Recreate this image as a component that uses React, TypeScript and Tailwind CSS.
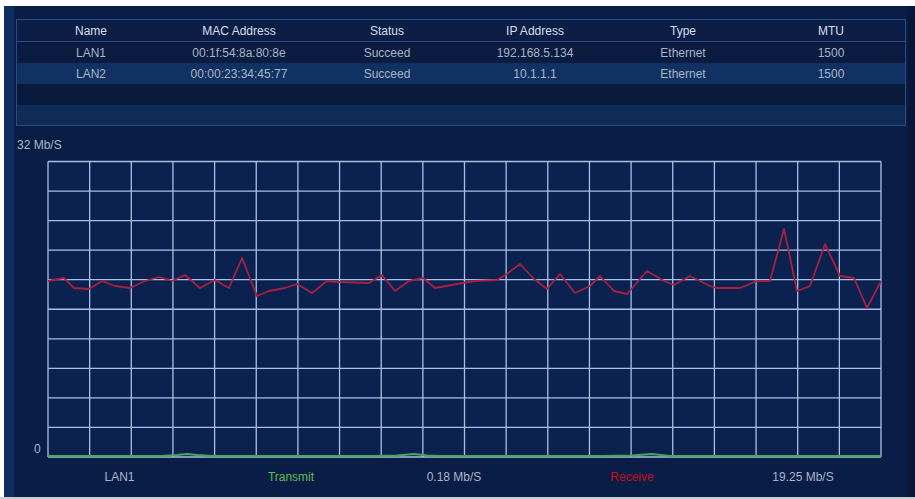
import React from 'react';

const columns = ['Name', 'MAC Address', 'Status', 'IP Address', 'Type', 'MTU'];

const rows = [
  ['LAN1', '00:1f:54:8a:80:8e', 'Succeed', '192.168.5.134', 'Ethernet', '1500'],
  ['LAN2', '00:00:23:34:45:77', 'Succeed', '10.1.1.1', 'Ethernet', '1500'],
];

// receive curve, page coordinates
const receive: [number, number][] = [
  [46, 280], [62, 277], [72, 287], [87, 288], [100, 280], [113, 285], [128, 287], [143, 280],
  [157, 276], [170, 280], [183, 274], [198, 287], [213, 279], [227, 287], [240, 257], [255, 295],
  [267, 290], [283, 287], [295, 283], [310, 292], [325, 280], [337, 281], [367, 282], [380, 274],
  [393, 290], [407, 280], [421, 277], [433, 287], [455, 283], [472, 280], [495, 279], [505, 273],
  [518, 263], [532, 278], [545, 288], [558, 273], [573, 292], [588, 285], [598, 275], [612, 290],
  [625, 293], [645, 270], [662, 280], [672, 284], [688, 275], [708, 285], [715, 287], [738, 287],
  [755, 280], [768, 280], [782, 228], [795, 290], [808, 285], [823, 243], [838, 275], [852, 277],
  [865, 307], [879, 280],
];

const transmit: [number, number][] = [
  [46, 455], [160, 455], [175, 454], [185, 453], [195, 454], [210, 455], [370, 455], [395, 454.5],
  [412, 453], [425, 454.5], [440, 455], [600, 455], [630, 454.5], [650, 453], [668, 455], [879, 455],
];

const toPoints = (pts: [number, number][]) => pts.map(([x, y]) => `${x},${y}`).join(' ');

function Chart() {
  const x0 = 46, x1 = 879, y0 = 160.5, y1 = 456;
  const vLines = Array.from({ length: 21 }, (_, i) => x0 + ((x1 - x0) * i) / 20);
  const hLines = Array.from({ length: 11 }, (_, i) => y0 + ((y1 - y0) * i) / 10);
  return (
    <svg width={836} height={299} viewBox="45 159 836 299" className="block">
      <rect x={x0} y={y0} width={x1 - x0} height={y1 - y0} fill="#0b2150" />
      {vLines.map((x, i) => (
        <line key={'v' + i} x1={x} y1={y0} x2={x} y2={y1} stroke="#aac0e2" strokeWidth={1.3} />
      ))}
      {hLines.map((y, i) => (
        <line key={'h' + i} x1={x0} y1={y} x2={x1} y2={y} stroke="#aac0e2" strokeWidth={1.3} />
      ))}
      <polyline points={toPoints(receive)} fill="none" stroke="#a8213f" strokeWidth={1.8} strokeLinejoin="round" />
      <polyline points={toPoints(transmit)} fill="none" stroke="#47a855" strokeWidth={2} strokeLinejoin="round" />
    </svg>
  );
}

export default function App() {
  return (
    <div
      className="w-[915px] h-[499px] bg-[#c9ccd2] overflow-hidden"
      style={{ fontFamily: '"Liberation Sans", Arial, sans-serif' }}
    >
      <div className="h-[6px] bg-white" />
      <div className="flex">
        <div className="w-[4px] h-[491px] bg-white" />
        <div className="w-[911px] h-[491px] bg-[#0a1d47] border-l-[10px] border-r-[7px] border-l-[#0f2d63] border-r-[#081739] pl-[2px] pt-[13px] text-[12px] leading-none">
          {/* Network table */}
          <div className="w-[890px] border border-[#2b4c80] bg-[#0b1c42]">
            <div className="grid grid-cols-6 h-[22px] items-center border-b border-[#2b4c80] bg-[#0c1e45] text-[#d6dee9]">
              {columns.map((c) => (
                <div key={c} className="text-center">{c}</div>
              ))}
            </div>
            {rows.map((r, i) => (
              <div
                key={i}
                className={`grid grid-cols-6 h-[21px] items-center text-[#a9b5c6] ${i % 2 === 0 ? 'bg-[#0b1c40]' : 'bg-[#113163]'}`}
              >
                {r.map((cell, j) => (
                  <div key={j} className="text-center">{cell}</div>
                ))}
              </div>
            ))}
            <div className="h-[21px] bg-[#0a1a3c]" />
            <div className="h-[20px] bg-[#0f2b58]" />
          </div>

          {/* Bandwidth chart */}
          <div className="mt-[13px] pl-[1px] text-[#aab6c8]">32 Mb/S</div>
          <div className="flex mt-[9px]">
            <div className="w-[31px] flex flex-col justify-end pb-[4px]">
              <span className="pl-[18px] text-[#aab6c8]">0</span>
            </div>
            <Chart />
          </div>

          {/* Legend */}
          <div className="flex mt-[12px] pl-[18px]">
            <div className="w-[171px] text-center text-[#aab6c8]">LAN1</div>
            <div className="w-[172px] text-center text-[#5cbd4c]">Transmit</div>
            <div className="w-[154px] text-center text-[#aab6c8]">0.18 Mb/S</div>
            <div className="w-[202px] text-center text-[#c3101e]">Receive</div>
            <div className="w-[140px] text-center text-[#aab6c8]">19.25 Mb/S</div>
          </div>
        </div>
      </div>
    </div>
  );
}
